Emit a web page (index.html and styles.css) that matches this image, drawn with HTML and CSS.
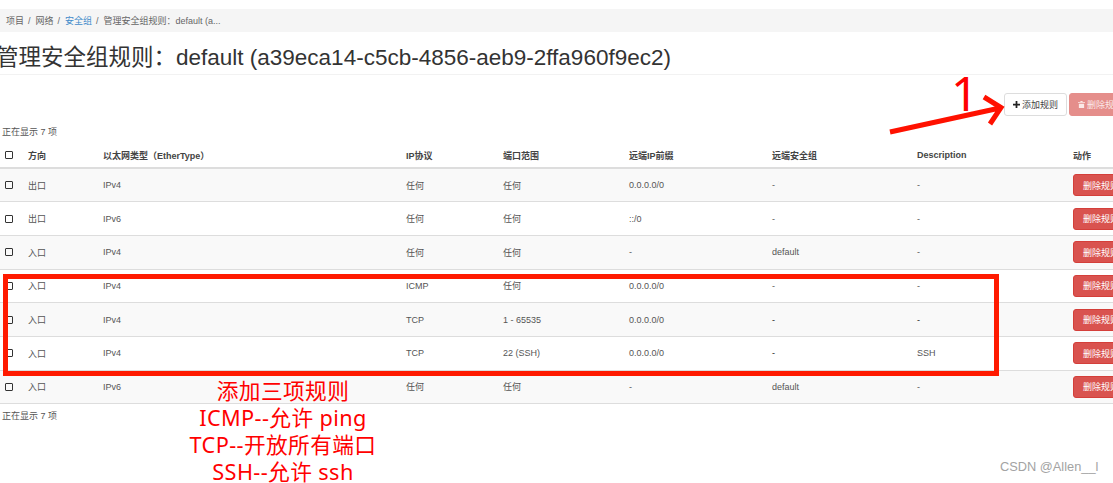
FILE: index.html
```html
<!DOCTYPE html>
<html lang="zh">
<head>
<meta charset="utf-8">
<title>管理安全组规则</title>
<link rel="stylesheet" href="styles.css">
</head>
<body>
<nav class="crumbs">
  <span>项目</span><i>/</i><span>网络</span><i>/</i><a>安全组</a><i>/</i><span>管理安全组规则：default (a...</span>
</nav>
<h1 class="title">管理安全组规则：default (a39eca14-c5cb-4856-aeb9-2ffa960f9ec2)</h1>
<div class="actions">
  <button class="btn add"><svg viewBox="0 0 8 8" class="ico"><path d="M3 0h2v3h3v2H5v3H3V5H0V3h3z"/></svg>添加规则</button>
  <button class="btn del-all"><svg viewBox="0 0 8 8" class="ico"><path d="M3 0h2l.5 1H8v1H0V1h2.5zM1 3h6v5H1z"/></svg>删除规则</button>
</div>
<p class="count first">正在显示 7 项</p>
<table class="rules">
  <colgroup>
    <col class="c1"><col class="c2"><col class="c3"><col class="c4"><col class="c5"><col class="c6"><col class="c7"><col class="c8"><col class="c9">
  </colgroup>
  <thead>
    <tr><th><span class="box"></span></th><th>方向</th><th>以太网类型（EtherType）</th><th>IP协议</th><th>端口范围</th><th>远端IP前缀</th><th>远端安全组</th><th>Description</th><th>动作</th></tr>
  </thead>
  <tbody>
    <tr><td><span class="box"></span></td><td>出口</td><td>IPv4</td><td>任何</td><td>任何</td><td>0.0.0.0/0</td><td>-</td><td>-</td><td><button class="btn del">删除规则</button></td></tr>
    <tr><td><span class="box"></span></td><td>出口</td><td>IPv6</td><td>任何</td><td>任何</td><td>::/0</td><td>-</td><td>-</td><td><button class="btn del">删除规则</button></td></tr>
    <tr><td><span class="box"></span></td><td>入口</td><td>IPv4</td><td>任何</td><td>任何</td><td>-</td><td>default</td><td>-</td><td><button class="btn del">删除规则</button></td></tr>
    <tr><td><span class="box"></span></td><td>入口</td><td>IPv4</td><td>ICMP</td><td>任何</td><td>0.0.0.0/0</td><td>-</td><td>-</td><td><button class="btn del">删除规则</button></td></tr>
    <tr><td><span class="box"></span></td><td>入口</td><td>IPv4</td><td>TCP</td><td>1 - 65535</td><td>0.0.0.0/0</td><td class="dark">-</td><td class="dark">-</td><td><button class="btn del">删除规则</button></td></tr>
    <tr><td><span class="box"></span></td><td>入口</td><td>IPv4</td><td>TCP</td><td>22 (SSH)</td><td>0.0.0.0/0</td><td class="dark">-</td><td>SSH</td><td><button class="btn del">删除规则</button></td></tr>
    <tr><td><span class="box"></span></td><td>入口</td><td>IPv6</td><td>任何</td><td>任何</td><td>-</td><td>default</td><td>-</td><td><button class="btn del">删除规则</button></td></tr>
  </tbody>
</table>
<p class="count">正在显示 7 项</p>

<div class="mark-box"></div>
<svg class="arrow" viewBox="0 0 1113 483" width="1113" height="483">
  <path class="arrow-line" d="M890 132L1000 108M984 97L1001 107.500L990 124"/>
</svg>
<div class="mark-one">1</div>
<div class="note">
  <div>添加三项规则</div>
  <div>ICMP--允许 ping</div>
  <div>TCP--开放所有端口</div>
  <div>SSH--允许 ssh</div>
</div>
<div class="wm">CSDN @Allen__l</div>
</body>
</html>
```
FILE: styles.css
```css
* { box-sizing: border-box; }
html, body { margin: 0; height: 483px; overflow: hidden; background: #fff; }
body {
  position: relative;
  width: 1113px;
  padding-top: 9px;
  font-family: "Liberation Sans", "Noto Sans CJK SC", sans-serif;
  font-size: 9px;
  color: #555;
}
.crumbs {
  display: flex;
  align-items: center;
  height: 23px;
  padding-left: 6px;
  background: #f5f5f5;
  color: #666;
}
.crumbs i { font-style: normal; margin: 0 5px 0 4px; }
.crumbs a { color: #428bca; }
.title {
  height: 43px;
  margin: 0 0 0 -4px;
  padding-top: 10px;
  border-bottom: 1px solid #f2f2f2;
  font-size: 22.500px;
  line-height: 32px;
  font-weight: 400;
  color: #333;
  white-space: nowrap;
}
.actions {
  display: flex;
  gap: 2px;
  height: 23px;
  margin: 18px 0 0 1004px;
  width: 120px;
}
.btn {
  flex: none;
  height: 23px;
  padding: 0 5px;
  border: 1px solid #ddd;
  border-radius: 3px;
  background: #fff;
  font: inherit;
  color: #444;
  white-space: nowrap;
}
.add { width: 63px; }
.del-all { width: 70px; padding-left: 8px; text-align: left; background: #e58e8b; border-color: #e58e8b; color: #fbe9e8; }
.ico { width: 7px; height: 7px; margin-right: 2px; fill: currentColor; }
.add .ico { fill: #222; }
.count { margin: 0; height: 14px; line-height: 14px; padding-left: 2px; color: #555; }
.first { margin-top: 9px; }
.rules {
  table-layout: fixed;
  border-collapse: collapse;
  width: 1150px;
  margin-top: 4px;
}
.c1 { width: 23px; } .c2 { width: 75px; } .c3 { width: 303px; } .c4 { width: 97px; }
.c5 { width: 126px; } .c6 { width: 143px; } .c7 { width: 145px; } .c8 { width: 156px; } .c9 { width: 82px; }
th, td { padding: 0 5px; text-align: left; white-space: nowrap; overflow: hidden; }
th { height: 25px; font-weight: 700; color: #444; border-bottom: 2px solid #ddd; }
td { height: 33.700px; border-top: 1px solid #ddd; }
tbody tr:first-child td { border-top: 0; }
tbody tr:nth-child(odd) { background: #f9f9f9; }
tbody tr:last-child td { border-bottom: 1px solid #ddd; }
.dark { color: #222; }
.box { display: block; width: 8px; height: 8px; border: 1.200px solid #333; border-radius: 1px; }
.del { width: 70px; height: 22px; padding: 0 0 0 9px; text-align: left; vertical-align: middle; background: #d9534f; border-color: #d43f3a; color: #fff; }
.rules + .count { margin-top: 5px; }

.mark-box {
  position: absolute;
  left: 3px; top: 274px;
  width: 996px; height: 102px;
  border: 5px solid #ff1a00;
}
.arrow { position: absolute; left: 0; top: 0; pointer-events: none; }
.arrow-line { fill: none; stroke: #ff1100; stroke-width: 5; }
.mark-one {
  position: absolute;
  left: 951px; top: 60px;
  font-family: "Noto Sans", sans-serif;
  font-size: 48px;
  line-height: 66px;
  color: #ff0000;
}
.note {
  position: absolute;
  left: 133px; top: 377px;
  width: 300px;
  text-align: center;
  font-family: "Noto Sans", "Noto Sans CJK SC", sans-serif;
  font-size: 21.700px;
  letter-spacing: 0.400px;
  line-height: 27px;
  color: #ff0000;
}
.wm {
  position: absolute;
  left: 1000px; top: 459px;
  font-size: 12.800px;
  line-height: 16px;
  color: #a3a3a3;
}
```
